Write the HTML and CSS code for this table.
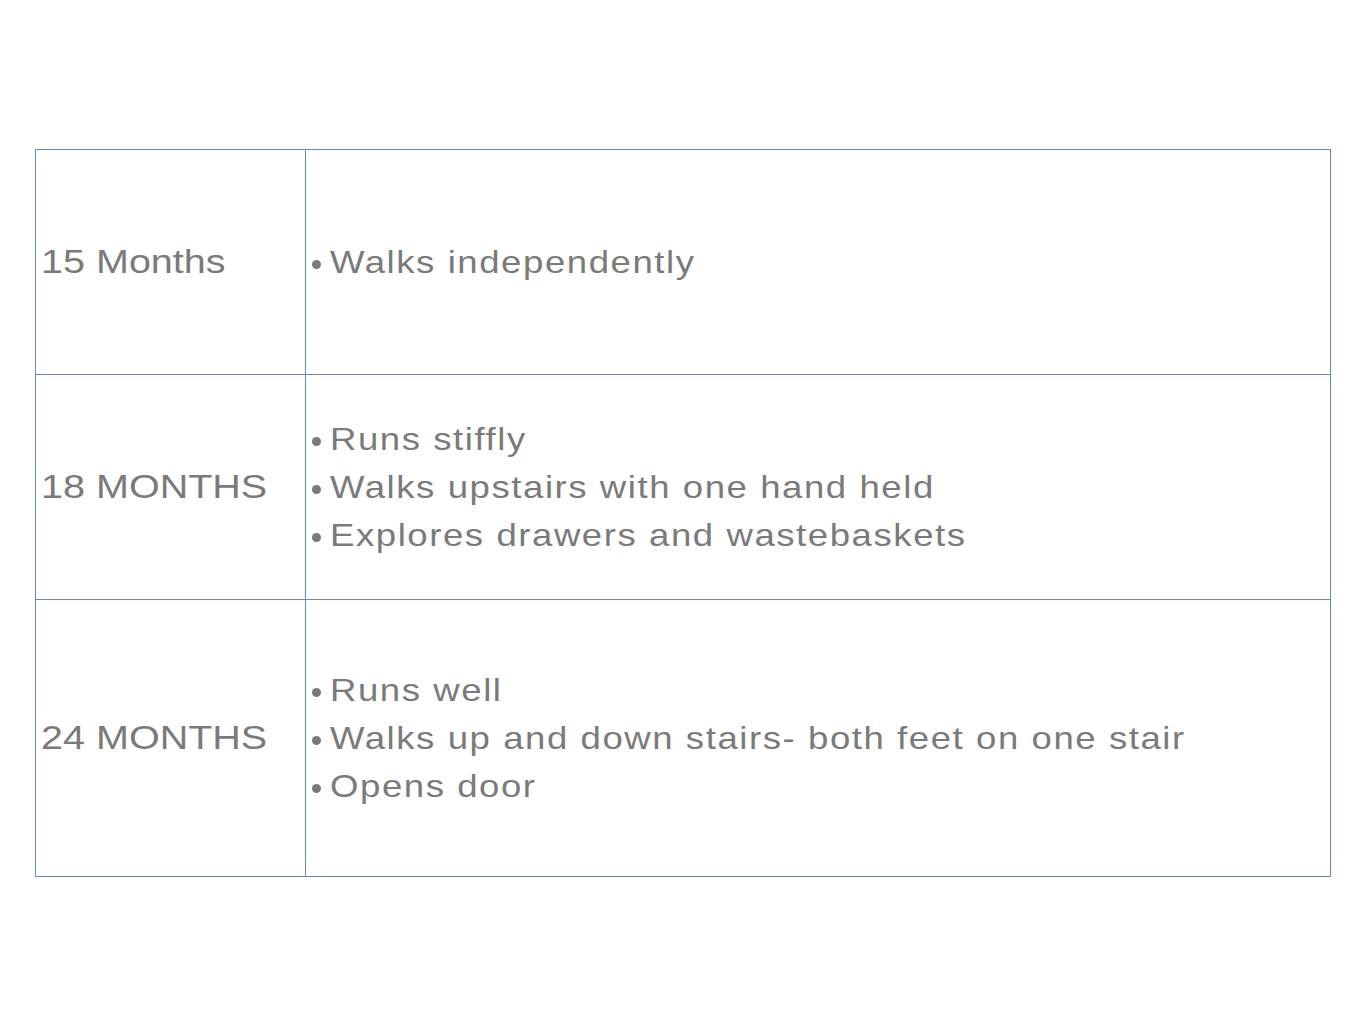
FILE: index.html
```html
<!DOCTYPE html>
<html>
<head>
<meta charset="utf-8">
<link rel="stylesheet" href="styles.css">
</head>
<body>
<div class="slide">
  <table class="milestones">
    <colgroup>
      <col class="col-age">
      <col class="col-skills">
    </colgroup>
    <tr class="row row-1">
      <td class="age"><span class="stretch">15 Months</span></td>
      <td class="skills">
        <ul>
          <li><span class="dot"></span><span class="stretch txt">Walks independently</span></li>
        </ul>
      </td>
    </tr>
    <tr class="row row-2">
      <td class="age"><span class="stretch">18 MONTHS</span></td>
      <td class="skills">
        <ul>
          <li><span class="dot"></span><span class="stretch txt">Runs stiffly</span></li>
          <li><span class="dot"></span><span class="stretch txt">Walks upstairs with one hand held</span></li>
          <li><span class="dot"></span><span class="stretch txt">Explores drawers and wastebaskets</span></li>
        </ul>
      </td>
    </tr>
    <tr class="row row-3">
      <td class="age"><span class="stretch">24 MONTHS</span></td>
      <td class="skills">
        <ul>
          <li><span class="dot"></span><span class="stretch txt">Runs well</span></li>
          <li><span class="dot"></span><span class="stretch txt">Walks up and down stairs- both feet on one stair</span></li>
          <li><span class="dot"></span><span class="stretch txt">Opens door</span></li>
        </ul>
      </td>
    </tr>
  </table>
</div>
</body>
</html>
```

FILE: styles.css
```css
html, body {
  margin: 0;
  padding: 0;
  background: #ffffff;
}

.slide {
  width: 1365px;
  height: 1024px;
  padding-top: 149px;
  padding-left: 35px;
  box-sizing: border-box;
}

.milestones {
  border-collapse: collapse;
  table-layout: fixed;
  width: 1295px;
  font-family: "Liberation Sans", Arial, sans-serif;
  color: #7a7a7a;
}

.col-age { width: 270px; }
.col-skills { width: 1025px; }

.milestones td {
  border: 1px solid #5f8cc2;
  vertical-align: middle;
  padding: 0;
}

.row-1 { height: 225px; }
.row-2 { height: 225px; }
.row-3 { height: 277px; }

.age {
  padding-left: 5px !important;
  font-size: 33.5px;
  line-height: 48px;
  white-space: nowrap;
}

.age .stretch {
  transform: scaleX(1.18);
}

.stretch {
  display: inline-block;
  transform: scaleX(1.16);
  transform-origin: left center;
  white-space: nowrap;
}

.skills {
  padding-left: 6px !important;
}

.skills ul {
  list-style: none;
  margin: 0;
  padding: 0;
}

.skills li {
  display: flex;
  align-items: center;
  height: 48px;
  font-size: 31.5px;
  line-height: 48px;
}

.dot {
  width: 9px;
  height: 9px;
  border-radius: 50%;
  background: #7a7a7a;
  margin-right: 9px;
  margin-top: 4px;
  flex: none;
}

.txt {
  letter-spacing: 1.35px;
}
```
